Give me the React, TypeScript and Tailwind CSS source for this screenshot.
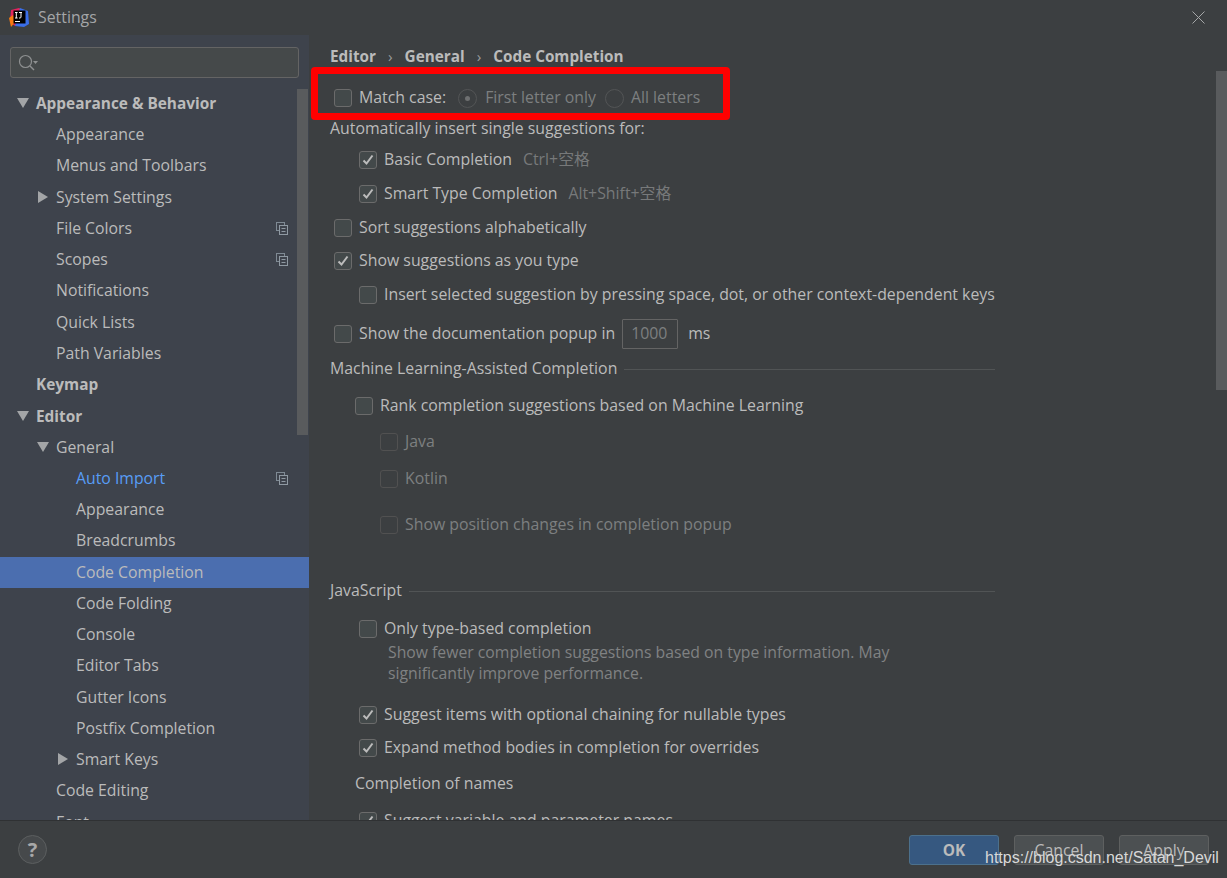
const FONT = "font-['Open_Sans','Noto_Sans_CJK_SC',sans-serif]"

const treeRows = [
  { label: 'Appearance & Behavior', level: 0, arrow: 'down', bold: true },
  { label: 'Appearance', level: 1 },
  { label: 'Menus and Toolbars', level: 1 },
  { label: 'System Settings', level: 1, arrow: 'right' },
  { label: 'File Colors', level: 1, copy: true },
  { label: 'Scopes', level: 1, copy: true },
  { label: 'Notifications', level: 1 },
  { label: 'Quick Lists', level: 1 },
  { label: 'Path Variables', level: 1 },
  { label: 'Keymap', level: 0, bold: true },
  { label: 'Editor', level: 0, arrow: 'down', bold: true },
  { label: 'General', level: 1, arrow: 'down' },
  { label: 'Auto Import', level: 2, copy: true, link: true },
  { label: 'Appearance', level: 2 },
  { label: 'Breadcrumbs', level: 2 },
  { label: 'Code Completion', level: 2, selected: true },
  { label: 'Code Folding', level: 2 },
  { label: 'Console', level: 2 },
  { label: 'Editor Tabs', level: 2 },
  { label: 'Gutter Icons', level: 2 },
  { label: 'Postfix Completion', level: 2 },
  { label: 'Smart Keys', level: 2, arrow: 'right' },
  { label: 'Code Editing', level: 1 },
  { label: 'Font', level: 1 },
]

function Arrow({ dir }: { dir: string }) {
  return (
    <svg width="12" height="12" viewBox="0 0 12 12" className="shrink-0">
      {dir === 'down' ? <path d="M0 1h12L6 11z" fill="#a3a5a7" /> : <path d="M1 0l10 6-10 6z" fill="#a3a5a7" />}
    </svg>
  )
}

function CopyIcon() {
  return (
    <svg width="12" height="13" viewBox="0 0 12 13" className="absolute left-[276px] top-[9px]">
      <rect x="0.5" y="0.5" width="8" height="8" fill="none" stroke="#7f8a94" />
      <rect x="3.5" y="3.5" width="8" height="9" fill="#3e434c" stroke="#8f99a2" />
      <path d="M5.5 6.5h4M5.5 9.5h4" stroke="#8f99a2" />
    </svg>
  )
}

function TreeRow({ row }: { row: (typeof treeRows)[number] }) {
  const pad = row.level === 0 ? 'pl-[36px]' : row.level === 1 ? 'pl-[56px]' : 'pl-[76px]'
  const arrowPos = row.level === 0 ? 'left-[17px]' : row.level === 1 ? 'left-[37px]' : 'left-[57px]'
  return (
    <div
      className={`relative flex h-[31.25px] shrink-0 items-center ${pad} ${row.selected ? 'bg-[#4b6eaf]' : ''} ${
        row.link ? 'text-[#589df6]' : 'text-[#bbbbbb]'
      } ${row.bold ? 'text-[15.4px] font-bold' : 'text-[15.8px]'}`}
    >
      {row.arrow && (
        <span className={`absolute top-[9px] ${arrowPos}`}>
          <Arrow dir={row.arrow} />
        </span>
      )}
      {row.label}
      {row.copy && <CopyIcon />}
    </div>
  )
}

function Check({ checked, disabled }: { checked?: boolean; disabled?: boolean }) {
  return (
    <span
      className={`flex h-[18px] w-[18px] shrink-0 items-center justify-center rounded-[3px] border ${
        disabled ? 'border-[#515151] bg-transparent' : 'border-[#6b6b6b] bg-[#43494a]'
      }`}
    >
      {checked && (
        <svg width="12" height="12" viewBox="0 0 12 12">
          <path d="M1.5 6.5l3 3 6-8" fill="none" stroke="#bcbcbc" strokeWidth="2" />
        </svg>
      )}
    </span>
  )
}

function CheckRow({
  label,
  indent,
  mt,
  checked,
  disabled,
  hint,
}: {
  label: string
  indent: string
  mt: string
  checked?: boolean
  disabled?: boolean
  hint?: string
}) {
  return (
    <div className={`flex h-6 items-center gap-[7px] ${indent} ${mt} ${disabled ? 'text-[#7d7f80]' : 'text-[#bbbbbb]'}`}>
      <Check checked={checked} disabled={disabled} />
      <span>{label}</span>
      {hint && <span className="ml-[4px] text-[#77797a]">{hint}</span>}
    </div>
  )
}

function Radio({ selected }: { selected?: boolean }) {
  return (
    <span className="flex h-[19px] w-[19px] shrink-0 items-center justify-center rounded-full border border-[#535556]">
      {selected && <span className="h-[5px] w-[5px] rounded-full bg-[#6e7071]" />}
    </span>
  )
}

function SectionTitle({ label, mt }: { label: string; mt: string }) {
  return (
    <div className={`flex h-6 w-[665px] items-center gap-[7px] text-[#bbbbbb] ${mt}`}>
      <span>{label}</span>
      <span className="h-px flex-1 bg-[#515455]" />
    </div>
  )
}

function DialogButton({ label, primary }: { label: string; primary?: boolean }) {
  return (
    <button
      type="button"
      className={`h-[30px] w-[90px] rounded-[3px] border pt-[2px] ${
        primary
          ? 'border-[#4c708c] bg-[#365880] text-[15.4px] font-bold text-[#bbbbbb]'
          : 'border-[#5e6060] bg-[#4c5052] text-[15.85px] text-[#bbbbbb]'
      }`}
    >
      {label}
    </button>
  )
}

export default function App() {
  return (
    <div className={`relative flex h-[878px] w-[1227px] flex-col overflow-hidden bg-[#3c3f41] text-[15.85px] ${FONT}`}>
      {/* title bar */}
      <div className="flex h-[35px] shrink-0 items-center pl-[9px]">
        <svg width="20" height="20" viewBox="0 0 20 20">
          <path d="M2 2l8-2 5 3-9 15-5-4z" fill="#e3245e" />
          <path d="M0 10l4-3 3 6-5 6z" fill="#f97a12" />
          <path d="M11 0l8 3 1 13-5 3-9-1z" fill="#3a6ee8" />
          <rect x="4.5" y="2.5" width="12" height="13" fill="#000" />
          <rect x="6" y="13" width="5" height="1" fill="#fff" />
          <path d="M6 4.5h2.6M7.3 4.5v5.5M6 10h2.6M10 4.5h3M12 4.5v4.5q0 1-1 1h-1" fill="none" stroke="#fff" strokeWidth="1" />
        </svg>
        <span className="ml-[9px] pt-[1px] text-[#a4a6a8]">Settings</span>
        <svg width="13" height="13" viewBox="0 0 13 13" className="ml-auto mr-[22px]">
          <path d="M0.5 0.5l12 12M12.5 0.5l-12 12" stroke="#a5a7a8" strokeWidth="1" />
        </svg>
      </div>

      <div className="flex min-h-0 flex-1">
        {/* sidebar */}
        <div className="relative flex w-[309px] shrink-0 flex-col overflow-hidden bg-[#3e434c]">
          <div className="mx-[10px] mt-[12px] flex h-[31px] shrink-0 items-center rounded-[3px] border border-[#646464] bg-[#45494a] pl-[7px]">
            <svg width="22" height="18" viewBox="0 0 22 18">
              <circle cx="7.5" cy="7.5" r="6" fill="none" stroke="#8e9091" strokeWidth="1.2" />
              <path d="M12 12l4 4" stroke="#8e9091" strokeWidth="1.4" />
              <path d="M15 7h5l-2.5 3z" fill="#8e9091" />
            </svg>
          </div>
          <div className="mt-[10px] flex flex-col">
            {treeRows.map((row, i) => (
              <TreeRow key={i} row={row} />
            ))}
          </div>
          <div className="absolute left-[297px] top-[54px] h-[346px] w-[11px] bg-[#595b5d]" />
        </div>

        {/* content */}
        <div className="relative min-w-0 flex-1 overflow-hidden pl-[21px]">
          <div className="flex h-[42px] items-center gap-[12px] text-[15.3px] font-bold text-[#bbbbbb]">
            <span>Editor</span>
            <span className="font-normal text-[#9a9c9d]">›</span>
            <span>General</span>
            <span className="font-normal text-[#9a9c9d]">›</span>
            <span>Code Completion</span>
          </div>

          <div className="mt-[9px] flex h-6 items-center pl-[4px] text-[#bbbbbb]">
            <Check />
            <span className="ml-[7px]">Match case:</span>
            <span className="ml-[12px]"><Radio selected /></span>
            <span className="ml-[8px] text-[#7d7f80]">First letter only</span>
            <span className="ml-[9px]"><Radio /></span>
            <span className="ml-[7px] text-[#7d7f80]">All letters</span>
          </div>
          <div className="mt-[7px] flex h-6 items-center text-[#bbbbbb]">Automatically insert single suggestions for:</div>
          <CheckRow indent="pl-[29px]" mt="mt-[7px]" checked label="Basic Completion" hint="Ctrl+空格" />
          <CheckRow indent="pl-[29px]" mt="mt-[10px]" checked label="Smart Type Completion" hint="Alt+Shift+空格" />
          <CheckRow indent="pl-[4px]" mt="mt-[10px]" label="Sort suggestions alphabetically" />
          <CheckRow indent="pl-[4px]" mt="mt-[9px]" checked label="Show suggestions as you type" />
          <CheckRow indent="pl-[29px]" mt="mt-[10px]" label="Insert selected suggestion by pressing space, dot, or other context-dependent keys" />
          <div className="mt-[15px] flex h-6 items-center pl-[4px] text-[#bbbbbb]">
            <Check />
            <span className="ml-[7px]">Show the documentation popup in</span>
            <span className="ml-[7px] flex h-[30px] w-[56px] items-center rounded-[1px] border border-[#646464] pl-[8px] text-[#7d7f80]">1000</span>
            <span className="ml-[10px]">ms</span>
          </div>
          <SectionTitle label="Machine Learning-Assisted Completion" mt="mt-[11px]" />
          <CheckRow indent="pl-[25px]" mt="mt-[13px]" label="Rank completion suggestions based on Machine Learning" />
          <CheckRow indent="pl-[50px]" mt="mt-[12px]" disabled label="Java" />
          <CheckRow indent="pl-[50px]" mt="mt-[13px]" disabled label="Kotlin" />
          <CheckRow indent="pl-[50px]" mt="mt-[22px]" disabled label="Show position changes in completion popup" />
          <SectionTitle label="JavaScript" mt="mt-[42px]" />
          <CheckRow indent="pl-[29px]" mt="mt-[14px]" label="Only type-based completion" />
          <p className="ml-[58px] mt-[1px] w-[530px] text-[15.75px] leading-[21px] text-[#808283]">
            Show fewer completion suggestions based on type information. May significantly improve performance.
          </p>
          <CheckRow indent="pl-[29px]" mt="mt-[19px]" checked label="Suggest items with optional chaining for nullable types" />
          <CheckRow indent="pl-[29px]" mt="mt-[9px]" checked label="Expand method bodies in completion for overrides" />
          <div className="mt-[12px] flex h-6 items-center pl-[25px] text-[#bbbbbb]">Completion of names</div>
          <CheckRow indent="pl-[29px]" mt="mt-[13px]" checked label="Suggest variable and parameter names" />

          <div className="absolute left-[907px] top-[36px] h-[319px] w-[11px] bg-[#595b5d]" />
        </div>
      </div>

      {/* footer */}
      <div className="flex h-[58px] shrink-0 items-center border-t border-[#2f3133] pl-[18px] pr-[18px]">
        <span className="flex h-[29px] w-[29px] items-center justify-center rounded-full border border-[#5c5f60] bg-[#46494b] text-[20px] font-bold text-[#a8a8a8]">
          ?
        </span>
        <div className="ml-auto flex gap-[15px]">
          <DialogButton label="OK" primary />
          <DialogButton label="Cancel" />
          <DialogButton label="Apply" />
        </div>
      </div>

      {/* annotation and watermark */}
      <div className="pointer-events-none absolute left-[311px] top-[67px] h-[53px] w-[419px] rounded-[4px] border-[7px] border-[#ff0000]" />
      <span className="pointer-events-none absolute left-[985px] top-[848px] font-['Liberation_Sans',sans-serif] text-[16px] leading-5 text-[#d8d8d8]">
        https://blog.csdn.net/Satan_Devil
      </span>
    </div>
  )
}
